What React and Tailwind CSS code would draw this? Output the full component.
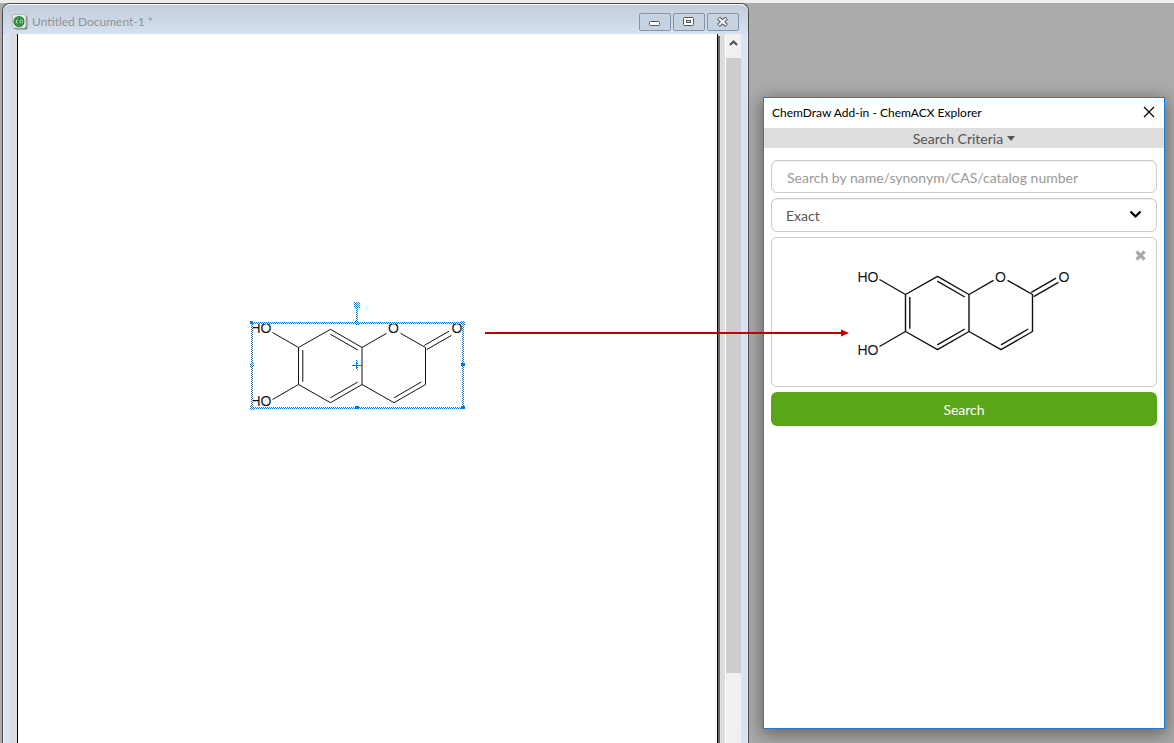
import React from "react";

const DOC_ICON = (
  <svg width="16" height="16" viewBox="0 0 16 16" aria-hidden="true">
    <rect x="1.5" y="1.5" width="14" height="14" rx="2" fill="#777d78" />
    <rect x="0.5" y="0.5" width="13.5" height="13.5" rx="2" fill="#e8eeea" stroke="#b4bcb7" />
    <circle cx="7" cy="7.5" r="5.5" fill="#1f7d32" />
    <circle cx="7" cy="7.5" r="4" fill="none" stroke="#49a65a" />
    <path d="M6.5 6H4.5v3h2M8 6v3h1.5l1-1V7l-1-1z" fill="none" stroke="#b9e0bd" strokeWidth="0.9" />
  </svg>
);

function Molecule({ strokeWidth, labelShift = 0 }) {
  return (
    <svg width="220" height="114" viewBox="0 0 220 114" role="img" aria-label="6,7-dihydroxycoumarin" className="block overflow-visible">
      <g fill="none" stroke="#111" strokeWidth={strokeWidth} strokeLinejoin="round">
        <path d="M50.5 49.5L82.5 31.3L114 49.5V86.5L82.5 104.7L50.5 86.5Z" />
        <path d="M54.8 52V83.8M82.3 36.2L109.8 52M82.3 99.8L109.8 84" />
        <path d="M114 49.5L138.5 35.3M152.5 35.3L177.5 49.5V86.5L146 104.7L114 86.5" />
        <path d="M146 99.8L173.3 84" />
        <path d="M176.3 47.4L201 33.2M178.7 51.6L203.4 37.4" />
        <path d="M50.5 49.5L24.5 34.5M50.5 86.5L24.5 101.5" />
      </g>
      <g fill="#111" className="font-['Liberation_Sans',sans-serif] text-[14px]">
        <text x="2.5" y={35 + labelShift}>HO</text>
        <text x="2.5" y={108 + labelShift}>HO</text>
        <text x="145.5" y={35 + labelShift} textAnchor="middle">O</text>
        <text x="209" y={35 + labelShift} textAnchor="middle">O</text>
      </g>
    </svg>
  );
}

function Selection() {
  return (
    <svg width="220" height="114" viewBox="0 0 220 114" className="absolute inset-0" shapeRendering="crispEdges" aria-hidden="true">
      <defs>
        <pattern id="dots" width="2" height="2" patternUnits="userSpaceOnUse">
          <rect width="2" height="2" fill="#fff" />
          <rect width="1" height="1" fill="#0078d7" />
          <rect x="1" y="1" width="1" height="1" fill="#0078d7" />
        </pattern>
      </defs>
      <g fill="url(#dots)">
        <rect x="3" y="24" width="213" height="2" />
        <rect x="3" y="109" width="213" height="2" />
        <rect x="3" y="24" width="2" height="87" />
        <rect x="214" y="24" width="2" height="87" />
        <rect x="108" y="9" width="2" height="16" />
        <rect x="106" y="4" width="6" height="6" />
        <rect x="107" y="23" width="4" height="4" />
        <rect x="213" y="23" width="4" height="4" />
        <rect x="2" y="65" width="4" height="4" />
        <rect x="2" y="108" width="4" height="4" />
        <rect x="108" y="62" width="2" height="10" />
      </g>
      <g fill="#0078d7">
        <rect x="2" y="23" width="3" height="3" />
        <rect x="213" y="65" width="4" height="3" />
        <rect x="107" y="108" width="4" height="3" />
        <rect x="213" y="108" width="4" height="3" />
        <rect x="104" y="67" width="10" height="1" />
        <rect x="108" y="65" width="1" height="5" />
      </g>
    </svg>
  );
}

function WindowButton({ label, children }) {
  return (
    <button type="button" aria-label={label} className="flex h-[18px] w-8 items-center justify-center rounded-xs border border-[#8495ab] bg-[#c5d2e2]">
      <svg width="12" height="10" viewBox="0 0 12 10" aria-hidden="true">{children}</svg>
    </button>
  );
}

function DocumentWindow() {
  return (
    <section className="ml-0.5 flex min-w-0 flex-1 flex-col rounded-t-lg border border-b-0 border-[#4b4b4b] bg-[#d8e4f2]">
      <header className="flex h-[30px] items-center rounded-t-lg border-t border-white bg-linear-to-b from-[#c1cddb] to-[#d5e1f0] pt-1 pr-[9px] pl-[9px]">
        {DOC_ICON}
        <h1 className="ml-1 flex-1 truncate text-[12px] text-[#929292]">Untitled Document-1 *</h1>
        <div className="flex gap-0.5">
          <WindowButton label="Minimize">
            <rect x="0.5" y="4.5" width="10" height="4" rx="1" fill="#fff" stroke="#555" />
          </WindowButton>
          <WindowButton label="Maximize">
            <rect x="0.5" y="0.5" width="10" height="8" rx="1" fill="#fff" stroke="#555" />
            <rect x="3.5" y="3.5" width="4" height="2" fill="#d3dde9" stroke="#555" />
          </WindowButton>
          <WindowButton label="Close">
            <path d="M1.5 1L9.5 8.5M9.5 1L1.5 8.5" stroke="#555" strokeWidth="4" />
            <path d="M2 1.5L9 8M9 1.5L2 8" stroke="#fff" strokeWidth="2" />
          </WindowButton>
        </div>
      </header>
      <div className="flex flex-1 border-x border-[#eaf1f9] px-1.5">
        <div className="flex flex-1 bg-[#dddddd] pr-[5px] pl-[7px]">
          <div className="flex-1 border-x border-black bg-white pt-[264px] pl-[230px]">
            <div className="relative w-[220px]">
              <Molecule strokeWidth={1} />
              <Selection />
            </div>
          </div>
          <div className="mt-0.5 w-0.5 bg-[#666666]" />
        </div>
        <div className="flex w-4 flex-col border-l border-white bg-[#f0f0f0]">
          <button type="button" aria-label="Scroll up" className="flex h-6 items-center justify-center pb-1.5">
            <svg width="9" height="6" viewBox="0 0 9 6" aria-hidden="true">
              <path d="M1 5L4.5 1.5L8 5" fill="none" stroke="#505050" strokeWidth="2" />
            </svg>
          </button>
          <div className="h-[615px] bg-[#cdcdcd]" />
        </div>
      </div>
    </section>
  );
}

function AddInPanel() {
  return (
    <aside className="mt-[94px] mr-[9px] mb-[14px] ml-[14px] flex w-[402px] flex-col border border-[#1a7fd9] bg-white shadow-[0_4px_16px_2px_rgba(0,0,0,0.4)]">
      <header className="flex h-[30px] items-center justify-between pr-[9px] pl-2">
        <h2 className="text-[12px] text-black">ChemDraw Add-in - ChemACX Explorer</h2>
        <button type="button" aria-label="Close" className="pb-0.5">
          <svg width="12" height="12" viewBox="0 0 12 12" aria-hidden="true">
            <path d="M1 1L11 11M11 1L1 11" stroke="#000" strokeWidth="1.2" />
          </svg>
        </button>
      </header>
      <button type="button" className="flex h-5 items-center justify-center gap-1 bg-[#dedede] text-[14px] text-[#555555]">
        Search Criteria
        <svg width="8" height="5" viewBox="0 0 8 5" aria-hidden="true"><path d="M0 0H8L4 5Z" fill="#555" /></svg>
      </button>
      <form className="flex flex-col gap-[5px] px-[7px] pt-3 text-[14px] text-[#555555]" onSubmit={(e) => e.preventDefault()}>
        <input type="text" aria-label="Search by name, synonym, CAS or catalog number" placeholder="Search by name/synonym/CAS/catalog number" className="h-[33px] rounded-md border border-[#cccccc] px-[15px] pt-0.5 shadow-[inset_0_1px_1px_rgba(0,0,0,0.08)] placeholder:text-[#999999]" />
        <div className="relative h-[34px]">
          <select aria-label="Match type" className="block h-full w-full appearance-none rounded-md border border-[#cccccc] bg-white px-[14px] shadow-[inset_0_1px_1px_rgba(0,0,0,0.08)]">
            <option>Exact</option>
          </select>
          <svg width="13" height="9" viewBox="0 0 13 9" className="pointer-events-none absolute top-3 right-[15px]" aria-hidden="true">
            <path d="M1.5 1.5L6.5 6.5L11.5 1.5" fill="none" stroke="#000" strokeWidth="2.2" />
          </svg>
        </div>
        <div className="relative flex h-[150px] justify-center rounded-md border border-[#cccccc] pt-[7px] pl-0.5">
          <Molecule strokeWidth={1.4} labelShift={2} />
          <button type="button" aria-label="Clear structure" className="absolute top-3 right-2.5">
            <svg width="11" height="11" viewBox="0 0 11 11" aria-hidden="true" className="block">
              <path d="M1.5 1.5L9.5 9.5M9.5 1.5L1.5 9.5" stroke="#a5aab0" strokeWidth="3.2" />
            </svg>
          </button>
        </div>
        <button type="submit" className="h-[34px] rounded-md bg-[#5aa618] text-white">Search</button>
      </form>
    </aside>
  );
}

export default function App() {
  return (
    <main className="relative flex min-h-screen overflow-hidden border-t-[3px] border-[#eeeeee] bg-[#ababab] font-['Lato',sans-serif]">
      <DocumentWindow />
      <AddInPanel />
      <svg width="364" height="8" viewBox="0 0 364 8" className="absolute top-[326px] left-[485px]" aria-hidden="true">
        <path d="M0 4H357" stroke="#c00000" strokeWidth="2" />
        <path d="M356 0.5L364 4L356 7.5Z" fill="#c00000" />
      </svg>
    </main>
  );
}
